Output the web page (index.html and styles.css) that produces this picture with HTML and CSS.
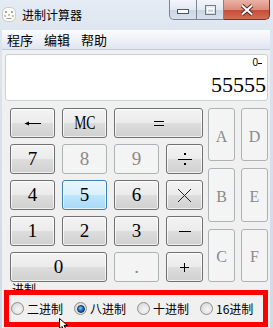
FILE: index.html
```html
<!DOCTYPE html>
<html>
<head>
<meta charset="utf-8">
<link rel="stylesheet" href="styles.css">
</head>
<body>
<div class="window">
  <div class="titlebar">
    <svg class="appicon" width="14" height="15" viewBox="0 0 14 15">
      <rect x="0.5" y="0.5" width="13" height="14" rx="5" fill="#fbfbf7" stroke="#c9c9c0"/>
      <circle cx="4" cy="5" r="1" fill="#8a8a80"/>
      <circle cx="10" cy="5" r="1" fill="#8a8a80"/>
      <circle cx="3" cy="9" r="0.9" fill="#b0a8a0"/>
      <circle cx="7" cy="8" r="0.9" fill="#b0a8a0"/>
      <circle cx="11" cy="9" r="0.9" fill="#b0a8a0"/>
      <path d="M4.5 11.5 H9.5" stroke="#9a9a90" stroke-width="1"/>
    </svg>
    <span class="title">进制计算器</span>
    <div class="caption">
      <div class="cbtn cmin">
        <svg width="12" height="6" viewBox="0 0 12 6"><rect x="0.5" y="0.5" width="11" height="4" fill="#fff" stroke="#4a5566"/></svg>
      </div>
      <div class="cbtn cmax">
        <svg width="11" height="10" viewBox="0 0 11 10"><rect x="0.5" y="0.5" width="10" height="9" fill="none" stroke="#6f7b8c"/><rect x="2.5" y="3.5" width="6" height="4" fill="none" stroke="#fff"/></svg>
      </div>
      <div class="cbtn cclose">
        <svg width="14" height="12" viewBox="0 0 14 12"><path d="M2 1.5 L12 10.5 M12 1.5 L2 10.5" stroke="#5b2a22" stroke-width="4"/><path d="M2 1.5 L12 10.5 M12 1.5 L2 10.5" stroke="#fff" stroke-width="2"/></svg>
      </div>
    </div>
  </div>
  <div class="client">
    <div class="menubar">
      <span class="menu">程序</span>
      <span class="menu">编辑</span>
      <span class="menu">帮助</span>
    </div>
    <div class="display">
      <div class="mem">0<span class="memdash"></span></div>
      <div class="value">55555</div>
    </div>
    <div class="keys">
      <div class="main">
        <div class="btn">
          <svg width="18" height="5" viewBox="0 0 18 5"><path d="M2 2.5 H17" stroke="#000" stroke-width="1"/><path d="M0.5 2.5 L5 0.5 V4.5 Z" fill="#000"/></svg>
        </div>
        <div class="btn"><span class="narrow">MC</span></div>
        <div class="btn span2">
          <svg width="10" height="7" viewBox="0 0 10 7"><path d="M0 1.5 H10 M0 5.5 H10" stroke="#000" stroke-width="1"/></svg>
        </div>
        <div class="btn">7</div>
        <div class="btn dis">8</div>
        <div class="btn dis">9</div>
        <div class="btn">
          <svg width="14" height="12" viewBox="0 0 14 12"><path d="M0 6.5 H14" stroke="#000" stroke-width="1"/><rect x="6" y="0" width="2" height="2" fill="#000"/><rect x="6" y="10" width="2" height="2" fill="#000"/></svg>
        </div>
        <div class="btn">4</div>
        <div class="btn hot">5</div>
        <div class="btn">6</div>
        <div class="btn">
          <svg width="15" height="15" viewBox="0 0 15 15"><path d="M1 1 L14 14 M14 1 L1 14" stroke="#222" stroke-width="1"/></svg>
        </div>
        <div class="btn">1</div>
        <div class="btn">2</div>
        <div class="btn">3</div>
        <div class="btn">
          <svg width="12" height="3" viewBox="0 0 12 3"><path d="M0 1.5 H12" stroke="#000" stroke-width="1"/></svg>
        </div>
        <div class="btn span2">0</div>
        <div class="btn dis">.</div>
        <div class="btn">
          <svg width="9" height="9" viewBox="0 0 9 9"><path d="M0 4.5 H9 M4.5 0 V9" stroke="#000" stroke-width="1"/></svg>
        </div>
      </div>
      <div class="hex">
        <div class="btn dis hexk">A</div>
        <div class="btn dis hexk">D</div>
        <div class="btn dis hexk">B</div>
        <div class="btn dis hexk">E</div>
        <div class="btn dis hexk">C</div>
        <div class="btn dis hexk">F</div>
      </div>
    </div>
    <div class="group-label">进制</div>
    <div class="group">
      <label class="radio"><span class="dot"></span><span>二进制</span></label>
      <label class="radio"><span class="dot on"></span><span>八进制</span></label>
      <label class="radio"><span class="dot"></span><span>十进制</span></label>
      <label class="radio"><span class="dot"></span><span>16进制</span></label>
    </div>
  </div>
  <svg class="cursor" width="12" height="12" viewBox="0 0 12 12"><path d="M0.5 0.5 V11 L3 8.5 L5 12 L7 11 L5 7.5 H8.5 Z" fill="#fff" stroke="#000" stroke-width="1"/></svg>
</div>
</body>
</html>
```

FILE: styles.css
```css
* { box-sizing: border-box; }
html, body { margin: 0; padding: 0; }
body {
  width: 273px;
  height: 328px;
  overflow: hidden;
  background: #cfdae8;
  font-family: "Noto Sans CJK SC", "Liberation Sans", sans-serif;
}
.window {
  position: relative;
  width: 273px;
  height: 328px;
  background: linear-gradient(#e4ebf4, #dbe4ef 40px, #cfdae8);
  padding: 0 3px 0 2px;
}
.titlebar {
  height: 30px;
  display: flex;
  align-items: flex-start;
}
.appicon { margin-top: 7px; margin-left: 0; flex: none; }
.title {
  margin-left: 6px;
  margin-top: 7px;
  font-size: 12px;
  line-height: 15px;
  color: #000;
}
.caption {
  margin-left: auto;
  display: flex;
  height: 20px;
}
.cbtn {
  height: 20px;
  display: flex;
  align-items: center;
  justify-content: center;
  border: 1px solid #7a8596;
  border-top: none;
}
.cmin {
  width: 28px;
  border-radius: 0 0 0 5px;
  background: linear-gradient(#f3f6fa, #e3e9f1 50%, #ccd6e3 51%, #d7e0ec);
  padding-top: 4px;
}
.cmax {
  width: 27px;
  border-left: none;
  background: linear-gradient(#f3f6fa, #e3e9f1 50%, #ccd6e3 51%, #d7e0ec);
}
.cclose {
  width: 46px;
  border-left: none;
  border-color: #6b3a32;
  border-radius: 0 0 5px 0;
  background: linear-gradient(#eab3a7, #dc8c7a 50%, #c74a33 51%, #d36d55);
}
.client {
  background: #f0f0f0;
  height: 298px;
}
.menubar {
  height: 20px;
  display: flex;
  align-items: center;
  background: linear-gradient(#fbfcfe, #eef1f8 50%, #dfe5f1);
  border-bottom: 1px solid #c4cad6;
  padding-left: 5px;
}
.menu {
  font-size: 13px;
  line-height: 16px;
  margin-right: 11px;
  color: #000;
}
.display {
  margin: 4px 2px 0 3px;
  height: 47px;
  background: #fff;
  border: 1px solid #c7d0dc;
  border-radius: 3px;
  display: flex;
  flex-direction: column;
  align-items: flex-end;
}
.mem {
  margin-top: 2px;
  margin-right: 5px;
  font-family: "Liberation Sans", sans-serif;
  font-size: 10px;
  line-height: 12px;
  display: flex;
  align-items: center;
  color: #000;
}
.memdash {
  display: block;
  width: 4px;
  height: 1px;
  background: #000;
}
.value {
  margin-top: 5px;
  margin-right: 1px;
  font-family: "Liberation Serif", serif;
  font-size: 22px;
  line-height: 22px;
  color: #000;
}
.keys {
  margin: 7px 0 0 8px;
  display: flex;
  gap: 5px;
}
.main {
  display: grid;
  grid-template-columns: 45px 45px 45px 37px;
  grid-template-rows: repeat(5, 30px);
  column-gap: 7px;
  row-gap: 6px;
}
.span2 { grid-column: span 2; }
.hex {
  display: grid;
  grid-template-columns: 27px 27px;
  grid-template-rows: repeat(3, 1fr);
  column-gap: 6px;
  row-gap: 7px;
}
.btn {
  border: 1px solid #707070;
  border-radius: 3px;
  background: linear-gradient(#f3f3f3 0%, #ebebeb 50%, #dddddd 51%, #d0d0d0 100%);
  display: flex;
  align-items: center;
  justify-content: center;
  font-family: "Liberation Serif", serif;
  font-size: 19px;
  line-height: 20px;
  color: #000;
  box-shadow: inset 0 0 0 1px rgba(255,255,255,0.7);
}
.btn.dis {
  border-color: #adb2b5;
  background: #f4f4f4;
  color: #8a8a8a;
  box-shadow: none;
}
.btn.hot {
  border-color: #3c7fb1;
  background: linear-gradient(#eaf6fd 0%, #d9f0fc 50%, #bee6fd 51%, #a7d9f5 100%);
}
.hexk {
  font-size: 16px;
  color: #8f8f8f;
  padding-top: 4px;
}
.narrow {
  display: inline-block;
  transform: scaleX(0.72);
}
.group-label {
  margin: 0 0 0 10px;
  height: 8px;
  font-size: 12px;
  line-height: 14px;
  color: #000;
}
.group {
  position: relative;
  margin-left: 2px;
  width: 264px;
  height: 37px;
  border: 5px solid #ff0000;
  display: flex;
  align-items: center;
  gap: 11px;
  padding-left: 2px;
  background: #f0f0f0;
}
.radio {
  display: flex;
  align-items: center;
  gap: 3px;
  font-size: 12px;
  line-height: 14px;
  color: #000;
}
.dot {
  width: 13px;
  height: 13px;
  border-radius: 50%;
  border: 1px solid #8e8f8f;
  background: radial-gradient(circle at 60% 60%, #f6f6f6 0%, #e2e2e2 55%, #c9c9c9 100%);
  display: flex;
  align-items: center;
  justify-content: center;
}
.dot.on::after {
  content: "";
  width: 6px;
  height: 6px;
  border-radius: 50%;
  background: radial-gradient(circle at 40% 35%, #8ad0ff 0%, #1f77c9 45%, #0a3c77 100%);
  border: 1px solid #0d2f55;
}
.cursor {
  position: absolute;
  left: 59px;
  top: 318px;
}
```
